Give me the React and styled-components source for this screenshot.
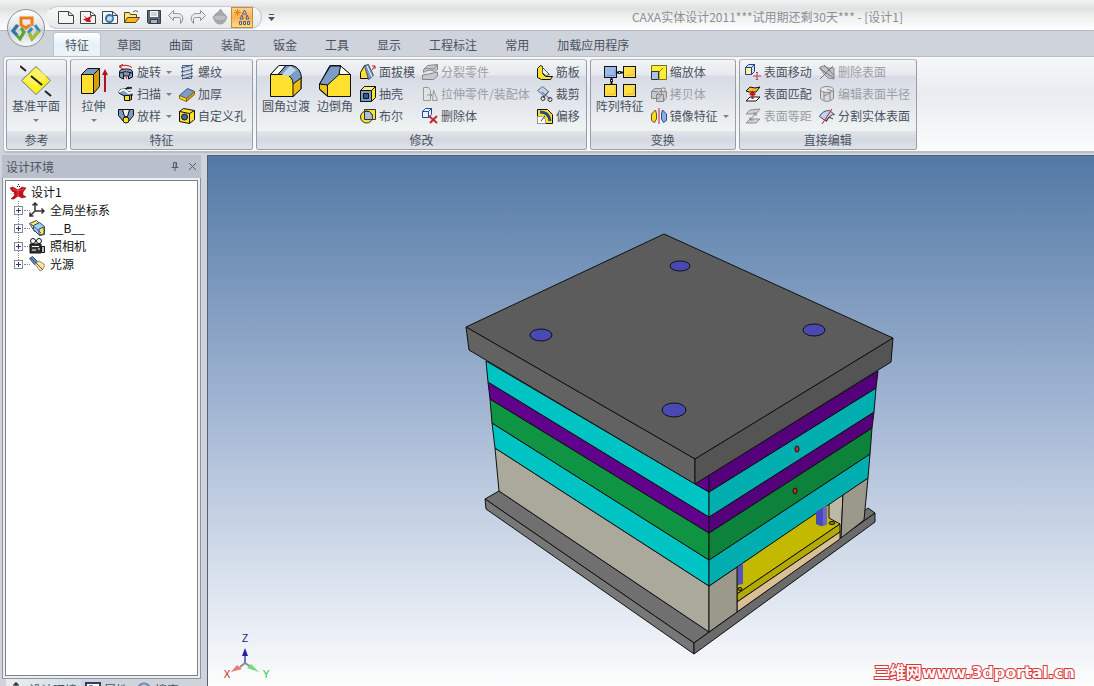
import { useState } from 'react';
import styled, { createGlobalStyle, css } from 'styled-components';

const GlobalStyle = createGlobalStyle`
  * {
    box-sizing: border-box;
  }

  body {
    margin: 0;
    overflow: hidden;
    font-family: "Noto Sans CJK SC", "Noto Sans", sans-serif;
    font-size: 12px;
    line-height: 18px;
    color: #4a525f;
  }

  button {
    font: inherit;
    color: inherit;
    padding: 0;
    border: 0;
    background: none;
    white-space: nowrap;
  }
`;

const Y = '#ffe02e';
const B = '#7b9cc6';
const K = '#111';

// ---------- icons ----------

const Svg = ({ size = 16, children }) => (
  <svg width={size} height={size} viewBox={`0 0 ${size} ${size}`} fill="none" stroke={K} aria-hidden="true">
    {children}
  </svg>
);

const page = <path d="M.5 2.500h10l5 4v8H.5z M10.500 2.500v4h5" fill="#f4f4f4" stroke="#444" />;

const icons = {
  newDoc: <Svg>{page}</Svg>,
  newPart: (
    <Svg>
      {page}
      <path d="M3 6l4 3 6-3-3 4 1 3H7L3 10l3-.5z" fill="#c3161c" stroke="none" />
    </Svg>
  ),
  newSheet: (
    <Svg>
      {page}
      <circle cx="7.500" cy="9.500" r="3.500" stroke="#2c6fb2" strokeWidth="2" />
      <path d="M5 9l5-2M5 12l6-3" stroke="#79b4e2" />
    </Svg>
  ),
  open: (
    <Svg>
      <path d="M.5 13.500v-10h5l1 2h6v3" fill="#ffe680" stroke="#5a4310" />
      <path d="M.5 13.500l3-5h12l-4 5z" fill="#f3b81f" stroke="#5a4310" />
      <path d="M9 3q3-3 5 0" stroke="#555" />
    </Svg>
  ),
  save: (
    <Svg>
      <path d="M1.500 1.500h13v13h-12l-1-1z" fill="#5d6778" stroke="#333b48" />
      <path d="M4 2h8v6H4z" fill="#f7f7f7" stroke="none" />
      <path d="M4.500 10.500h7v4h-7z" fill="#aeb5c0" stroke="#333b48" />
      <path d="M5 4h6M5 6h6" stroke="#a9b0ba" />
    </Svg>
  ),
  undo: (
    <Svg>
      <path d="M.5 6.500l5-5v3h4c4 0 6 3 5 7l-2 3v-4c0-2-1-2-3-2h-4v3z" fill="#e9ebee" stroke="#8d9199" />
    </Svg>
  ),
  redo: (
    <Svg>
      <path d="M15.500 6.500l-5-5v3h-4c-4 0-6 3-5 7l2 3v-4c0-2 1-2 3-2h4v3z" fill="#e9ebee" stroke="#8d9199" />
    </Svg>
  ),
  sphere: (
    <Svg>
      <path d="M6.500 3l2-3 2 3" fill="#bbb" stroke="#999" />
      <circle cx="8" cy="9" r="6" fill="#a8aaad" stroke="#9a9c9f" />
      <path d="M1 9q0-2 3-3h8q3 1 3 3-3 3-7 3T1 9" fill="#bcbec1" stroke="#9a9c9f" />
    </Svg>
  ),
  treeStar: (
    <Svg>
      <path d="M3.500 0v7M0 3.500h7M1 1l5 5M6 1L1 6" stroke="#e08a14" />
      <path d="M10.500 1l-2 4h4zM8 6l-2 4h3zM13 6l-1 4h3z" fill="#cfd5df" stroke="#555e6e" />
      <path d="M5.500 12.500h2v3h-2zM9.500 12.500h2v3h-2zM13.500 12.500h2v3h-2z" fill="#cfd5df" stroke="#555e6e" />
    </Svg>
  ),
  plane: (
    <Svg size={32}>
      <path d="M16 1.500L30.500 15.500 16 29.500 1.500 15.500z" fill="#ffee22" stroke="#5f7d9a" />
      <path d="M16 3L3 15.500 16 21 28 10z" fill="#fff799" stroke="none" opacity=".5" />
      <path d="M11 11l11 9M0 1l6 5M25 26l6 5" stroke="#222" strokeWidth="2" />
    </Svg>
  ),
  extrude: (
    <Svg size={32}>
      <path d="M3.500 9.500h12v19h-12z" fill={Y} />
      <path d="M3.500 9.500l6-6h12l-6 6z" fill={B} />
      <path d="M15.500 9.500l6-6v18l-6 7z" fill="#d99c0e" />
      <path d="M27 27V7" stroke="#b3131b" strokeWidth="2" />
      <path d="M24 10l3-6 3 6z" fill="#b3131b" stroke="none" />
    </Svg>
  ),
  fillet: (
    <Svg size={32}>
      <path d="M.5 9.500L9 .5h13q9 2 9 14L31 24l-8 7.500H.5z" fill={Y} />
      <path d="M.5 9.500L9 .5h7L8 9.500z" fill="#fff" />
      <path d="M8 9.500l8-9h6q9 2 9.500 13L23 19q0-8-8-9.500z" fill={B} />
      <path d="M12 9.500L20 1l6 4-8 7z" fill="#c4d5ea" stroke="none" />
      <path d="M23 19l8-6v11l-8 7.500z" fill="#f0b916" />
    </Svg>
  ),
  chamfer: (
    <Svg size={32}>
      <path d="M.5 19.500L11 .5h10l10.500 9v22H8.500l-8-7z" fill={Y} />
      <path d="M.5 19.500L11 .5h10L9 19.500z" fill={B} />
      <path d="M21 .5l10.500 9H20z" fill="#fff" />
      <path d="M.5 19l11-18h10L20 9.500 8.500 20z" fill={B} />
      <path d="M.5 19l8 1v11l-8-7z" fill="#e9c414" />
    </Svg>
  ),
  pattern: (
    <Svg size={32}>
      <path d="M13 7.500h7M7.500 13v7" strokeWidth="2" />
      <rect x=".5" y="1.500" width="12" height="11" fill="#9bb9eb" />
      <rect x="19.500" y="1.500" width="12" height="11" fill="#ffdf45" />
      <rect x=".5" y="19.500" width="12" height="12" fill="#ffdf45" />
      <rect x="19.500" y="19.500" width="12" height="12" fill="#ffdf45" />
      <path d="M14.500 6.500h2v2h-2zM6.500 14.500h2v2h-2z" fill="#fff" />
      <path d="M22 10h8V4M3 29h8v-7M22 29h8v-7" stroke="#f0b435" />
      <path d="M3 10.500h8V4" stroke="#6e93d2" />
    </Svg>
  ),
  revolve: (
    <Svg>
      <path d="M1.500 8q0-3 6.500-3t6.500 3v5l-4 2v-3h-5v3l-4-2z" fill={B} />
      <path d="M2 9q6-3 12 0M6 12l-1-3M11 12l1-3" />
      <path d="M2 2.500q6-3 12 1M5 0L1 2.500 5 5" stroke="#c3161c" />
      <path d="M8.500 4v11" stroke="#d44" strokeDasharray="2 1" />
    </Svg>
  ),
  sweep: (
    <Svg>
      <path d="M14 2Q9 0 8 3t6 3v4q-4 2-8 0L1 7q-1-4 5-4l8-1" fill={B} />
      <path d="M1 6q5-4 7-1t7 1" stroke="#fff" strokeWidth="2" />
      <path d="M6.500 9.500h5v5h-5z" fill={Y} />
      <path d="M11.500 9.500l2-1v5l-2 1z" fill="#d99c0e" />
    </Svg>
  ),
  loft: (
    <Svg>
      <path d="M.5 1.500h4l3 8-2 4-5-6zM15.500 1.500h-4l-3 8 2 4 5-6z" fill={B} />
      <path d="M4.500 1.500h7l-2 7h-3z" fill="#eef3f8" />
      <circle cx="8" cy="12" r="3" fill={Y} />
    </Svg>
  ),
  thread: (
    <Svg>
      <path d="M3.500 1.500h9v13h-9z" fill="#e6ecf4" stroke="#52627c" />
      <path d="M2 4l12-3M2 8l12-3M2 12l12-3M3 15l11-3" stroke="#40526e" />
      <path d="M3 5l10-2M3 9l10-2M3 13l10-2" stroke="#aebfd8" />
    </Svg>
  ),
  thicken: (
    <Svg>
      <path d="M.5 9.500l8-7 7 3-7 8z" fill={B} stroke="#3f506c" />
      <path d="M.5 9.500l7 3v3l-7-3z" fill={Y} stroke="#7b6413" />
      <path d="M7.500 12.500l8-7v3l-8 7z" fill="#d6a316" stroke="#7b6413" />
    </Svg>
  ),
  hole: (
    <Svg>
      <path d="M.5 3.500l4-3 11 2v9l-5 4-10-2z" fill={Y} />
      <path d="M10.500 5.500v10M.5 3.500l10 2 5-3" />
      <circle cx="5.500" cy="9" r="3" fill="#376bad" />
    </Svg>
  ),
  draft: (
    <Svg>
      <path d="M.5 14.500v-6l4-7h3l1 13z" fill={Y} />
      <path d="M4.500 1.500l4-1 5 11-5 4z" fill={B} stroke="#40526e" />
      <path d="M7 2l5 11" stroke="#fff" />
      <path d="M12 6l3-4M12 2h3v3" stroke="#c3161c" />
    </Svg>
  ),
  shell: (
    <Svg>
      <path d="M.5 4.500l4-4h11v11l-4 4H.5z" fill={Y} />
      <path d="M.5 4.500l4-4h11l-4 4z" fill="#fff07b" />
      <path d="M.5 4.500h11v11H.5z" fill={B} />
      <path d="M3.500 7.500h5v5h-5z" fill="#2d5b92" />
    </Svg>
  ),
  boolean: (
    <Svg>
      <path d="M4.500 1.500h11v10h-11z" fill={Y} stroke="#333" />
      <circle cx="6.500" cy="9" r="6" fill={Y} stroke="#333" />
      <path d="M4.500 3.500h5q4 3 3 8h-8z" fill="#a9bfe0" stroke="#333" />
    </Svg>
  ),
  split: (
    <Svg>
      <path d="M1.500 5.500l4-4 10-1v5l-3 2q-5-3-11 1zM.5 11l6-1 9-2v4l-4 3.500H.5z" fill="#c6c8cb" stroke="#888" />
      <path d="M2 5q5-1 10 0l3-4" stroke="#888" />
    </Svg>
  ),
  stretch: (
    <Svg>
      <path d="M1.500 1.500h5l2 3v10h-7zM11.500 4l4 10.500h-5z" fill="#e1e2e4" stroke="#999" />
      <path d="M5 9h5M8 7l2 2-2 2" stroke="#999" />
    </Svg>
  ),
  deleteBody: (
    <Svg>
      <path d="M.5 3.500l3-3h6v6l-3 3h-6z" fill="#e9f1ff" stroke="#234a9a" />
      <path d="M.5 3.500h6v6M6.500 3.500l3-3" stroke="#234a9a" />
      <path d="M7 8l8 7M15 8l-7 7" stroke="#c12a32" strokeWidth="2" />
    </Svg>
  ),
  rib: (
    <Svg>
      <path d="M.5 4.500l3-3 2 1v7l3 3h7l-2 3h-9l-4-2z" fill={Y} />
      <path d="M5.500 3.500l7 7-4 1-3-3z" fill="#e8eef5" stroke="#555" />
    </Svg>
  ),
  trim: (
    <Svg>
      <path d="M.5 4.500l5-4 6 5-4 5z" fill="#c0d2ee" stroke="#5c6d8b" />
      <path d="M5 6l8 7M12 5l-6 7" stroke="#555" />
      <circle cx="13" cy="13.500" r="2" stroke="#333" />
      <circle cx="6" cy="12.500" r="2" stroke="#333" />
    </Svg>
  ),
  offset: (
    <Svg>
      <path d="M.5 1.500h10l5 5v9h-15z" fill={Y} />
      <path d="M3 4q9 0 10 9" stroke="#244d82" strokeWidth="3" />
      <path d="M.5 8.500h5l3 3v4h-8z" fill="#fff" stroke="#999" />
      <path d="M8 8l-4 5" stroke="#333" />
    </Svg>
  ),
  scale: (
    <Svg>
      <path d="M.5 1.500h15v14H8v-8H.5z" fill="#ffee35" stroke="#7c7116" />
      <path d="M.5 7.500h7v8h-7z" fill="#a9c2e8" stroke="#333" />
      <path d="M8 8l4-4" stroke="#7c7116" />
    </Svg>
  ),
  copyBody: (
    <Svg>
      <path d="M.5 5.500l3-3h7v6l-3 4h-7zM5.500 8.500l3-3h7v6l-3 4h-7zM5.500 8.500h7v7M.5 5.500h6" fill="#c7c9cc" stroke="#888" />
      <path d="M11 2h3v3" stroke="#888" />
    </Svg>
  ),
  mirror: (
    <Svg>
      <path d="M.5 6l4-4 1 4v5l-2 3.500-3-2z" fill="#ffd92a" stroke="#665515" />
      <path d="M15.500 6l-4-4-1 4v5l2 3.500 3-2z" fill="#84aef0" stroke="#2c4d88" />
      <path d="M8 0v16" stroke="#d31c25" />
    </Svg>
  ),
  moveFace: (
    <Svg>
      <path d="M.5 3.500l3-3h6v7l-3 3h-6z" fill="#cfe1ff" stroke="#223f85" />
      <path d="M6.500 3.500v7M6.500 3.500l3-3M.5 3.500h6" stroke="#223f85" />
      <path d="M1 4h5v6H1z" fill="#fff2a0" stroke="none" />
      <path d="M12 8v8M8 12h8M11 9l1-1 1 1M11 15l1 1 1-1" stroke="#b54045" />
    </Svg>
  ),
  matchFace: (
    <Svg>
      <path d="M1 5l4-4q5 2 10 0l-4 5H4z" fill="#f5bf28" />
      <path d="M1 15l4-4h10l-4 4z" fill="#fff" />
      <path d="M7.500 13V6M5 9l2.500-3L10 9" stroke="#c3161c" strokeWidth="2" />
    </Svg>
  ),
  offsetFace: (
    <Svg>
      <path d="M1 6l4-4 10-1-4 5zM1 15l4-4h10l-4 4z" fill="#d0d2d5" stroke="#8d8f92" />
      <path d="M5 12l6-7M8 5h3v3M5 9v3h3" stroke="#888" />
    </Svg>
  ),
  deleteFace: (
    <Svg>
      <path d="M1 3l4-1q3 3 10 2v11l-6-1Q3 9 1 3z" fill="#bfc1c4" stroke="#888" />
      <path d="M0 4l15 10M1 15L14 2M5 1l10 10" stroke="#777" />
    </Svg>
  ),
  editRadius: (
    <Svg>
      <path d="M1.500 3.500v9q6 6 13 0v-9" fill="#d8d9dc" stroke="#888" />
      <ellipse cx="8" cy="3.500" rx="6.500" ry="3" fill="#e4e5e7" stroke="#888" />
      <path d="M5 6v8M11 6v8M5 10l6-3M8 3l5 2" stroke="#888" />
    </Svg>
  ),
  splitFace: (
    <Svg>
      <path d="M.5 8.500q3-6 10-6l5 4q-5 0-8 7z" fill="#c3d1f0" stroke="#444b66" />
      <path d="M13 1L3 16" stroke="#c3161c" />
      <path d="M7 13l3-4 4 2" stroke="#333" />
    </Svg>
  ),
  design: (
    <Svg>
      <path d="M0 4l3-1 5 3 4-3 4 1-3 4v3l3 2-4 1-4-2-4 3H1l4-4z" fill="#c90f17" stroke="#7c0509" strokeWidth=".5" />
      <path d="M3 5l5 2v5M8 7l6-2" stroke="#ff8a8a" strokeWidth=".5" />
      <path d="M7 2.500h3M8.500 0v2" stroke="#222" strokeDasharray="1 1" />
      <path d="M0 8.500h4" stroke="#fff" />
    </Svg>
  ),
  axes: (
    <Svg>
      <path d="M6 1v8l-5 5M6 9h9M3.500 3.500L6 1l2.500 2.500M12.500 6.500L15 9l-2.500 2.500M1 10.500V14h3.500" stroke="#333" strokeWidth="1.500" />
    </Svg>
  ),
  part: (
    <Svg>
      <path d="M.5 3.500l7-3 3 3-1 7-4 1z" fill="#ffe96a" stroke="#444" />
      <path d="M4.500 5.500l6-3 5 4v8l-5 1-6-6z" fill="#9fd0f5" stroke="#2d4a6e" />
      <path d="M10 9l5-2v7l-5 1z" fill="#f4e268" stroke="#444" />
      <path d="M2 4l10 9" stroke="#2d5b92" />
    </Svg>
  ),
  camera: (
    <Svg>
      <circle cx="4" cy="3" r="2.500" fill="#fff" />
      <circle cx="10" cy="3" r="2.500" fill="#fff" />
      <path d="M1 6h11v9H1z" fill="#333" />
      <path d="M3 8.500h7M3 12h4M9 11h2" stroke="#fff" />
      <path d="M12.500 8.500h3v6h-3z" fill="#bbb" />
    </Svg>
  ),
  light: (
    <Svg>
      <path d="M.5 2.500l3-2 5 5-3 3z" fill="#5d8fc7" stroke="#284c7e" />
      <path d="M6 8l4-3 5 3q1 5-4 7z" fill="#fbe3a6" stroke="#a58c5d" />
      <path d="M2 2l12 12" stroke="#4e5b70" />
    </Svg>
  ),
  searchTab: (
    <Svg>
      <circle cx="8" cy="8" r="6.500" stroke="#7589aa" strokeWidth="2" />
      <circle cx="8" cy="8" r="3" stroke="#7589aa" />
    </Svg>
  ),
  propsTab: (
    <Svg>
      <path d="M1 1h14v14H1z" fill="#fff" stroke="#2c3e66" strokeWidth="2" />
      <path d="M4 4h4v6H4z" fill="#37609c" />
      <path d="M10 5h4M10 8h4" stroke="#2c3e66" />
    </Svg>
  ),
};

const AppMark = () => (
  <svg width="40" height="40" viewBox="0 0 40 40" fill="none" strokeWidth="3" aria-hidden="true">
    <defs>
      <linearGradient id="orb" x1="0" y1="0" x2="0" y2="1">
        <stop offset="0" stopColor="#fff" />
        <stop offset=".5" stopColor="#e1e3e6" />
        <stop offset=".55" stopColor="#cdd0d5" />
        <stop offset="1" stopColor="#fafafa" />
      </linearGradient>
    </defs>
    <circle cx="20" cy="20" r="18.500" fill="url(#orb)" stroke="#8e9299" strokeWidth="1" />
    <path d="M15 18v-8h11v8M15 17l5 3 4-3" stroke="#ef7d1a" />
    <path d="M11 17l-4 6 7 8 4-7-3-4" stroke="#54a72f" />
    <path d="M12 17l-5 6 4 4" stroke="#2c73b8" />
    <path d="M29 17l4 6-7 8-3-7 3-4" stroke="#2b8fc2" />
    <path d="M33 23l-7 8-3-6" stroke="#a5bf2e" />
  </svg>
);

// ---------- title bar ----------

const Shell = styled.div`
  display: flex;
  flex-direction: column;
  height: 100vh;
  overflow: hidden;
  background: #cfd3dc;
`;

const TitleBar = styled.header`
  position: relative;
  display: flex;
  align-items: center;
  flex: none;
  height: 31px;
  padding: 4px 0 0 46px;
  border-bottom: 1px solid #b4b8c0;
  background: linear-gradient(#f1f3f2, #dfe2e2 30%, #eef0f0 55%, #fdfdfd);
`;

const Orb = styled.button`
  position: absolute;
  left: 6px;
  top: 8px;
  height: 40px;
  z-index: 1;
`;

const QuickBar = styled.div`
  display: flex;
  align-items: center;
  height: 23px;
  padding: 0 8px;
  border: 1px solid #c6cad0;
  border-left-color: transparent;
  border-radius: 12px;
  background: linear-gradient(#f7f8f9, #e6e9eb);
`;

const QuickButton = styled.button`
  display: grid;
  place-items: center;
  width: 22px;
  height: 21px;
  ${({ $active }) =>
    $active &&
    css`
      border: 1px solid #c48b3c;
      background: linear-gradient(#f9cf93, #fdb052 50%, #ffdc85);
    `}
`;

const MoreButton = styled.button`
  display: grid;
  place-items: center;
  width: 19px;
  height: 20px;
`;

const Title = styled.h1`
  flex: 1;
  margin: 0;
  padding-left: 160px;
  font-size: 12px;
  font-weight: 400;
  color: #8b8e92;
  text-align: center;
  white-space: nowrap;
`;

// ---------- ribbon ----------

const TabRow = styled.nav`
  display: flex;
  align-items: flex-end;
  flex: none;
  height: 25px;
  padding-left: 51px;
`;

const Tab = styled.button`
  height: 23px;
  margin: 0 3px;
  padding: 0 11px;
  ${({ $active }) =>
    $active &&
    css`
      border-radius: 3px 3px 0 0;
      background: linear-gradient(#fff, #e4f2f7 50%, #eef2f6);
      box-shadow: 0 0 2px #8fa4ad;
    `}
`;

const Ribbon = styled.section`
  display: flex;
  gap: 3px;
  flex: none;
  height: 97px;
  margin-left: 3px;
  padding: 2px;
  border: 1px solid #b9bdc6;
  border-width: 1px 0 2px 1px;
  border-radius: 4px 0 0 4px;
  background: linear-gradient(#f6f7f9, #e9ecf0 40%, #fbfcfc);
`;

const Group = styled.div`
  display: flex;
  flex-direction: column;
  height: 91px;
  border: 1px solid #989da7;
  border-top-color: #b8bcc4;
  border-radius: 3px;
  background: linear-gradient(#f1f3f5, #e6e9ee 17%, #d7dbe5 18%, #e3e7ec 50%, #f0f5f3 82%, #eef1f3);
`;

const GroupBody = styled.div`
  display: flex;
  gap: 7px;
  padding: 1px 6px 0 5px;
`;

const GroupName = styled.div`
  margin-top: auto;
  height: 18px;
  line-height: 18px;
  text-align: center;
  border-radius: 0 0 3px 3px;
  background: linear-gradient(#e2e5ea, #d3d7e0 50%, #dfe4e7);
`;

const BigButton = styled.button`
  display: flex;
  flex-direction: column;
  align-items: center;
  height: 68px;
  min-width: 35px;
  padding-top: 4px;
`;

const Column = styled.div`
  display: grid;
  grid-auto-rows: 22px;
  justify-items: start;
`;

const SmallButton = styled.button`
  display: flex;
  align-items: center;
  gap: 3px;

  &:disabled {
    color: #9b9ea3;
  }
`;

const Caret = styled.i`
  margin: 4px 0 0 2px;
  border: 3px solid transparent;
  border-top-color: #7b808a;

  ${BigButton} & {
    margin: 4px 0 0;
  }
`;

// ---------- work area ----------

const Work = styled.main`
  display: flex;
  flex: 1;
  min-height: 0;
  padding-top: 2px;
`;

const Dock = styled.aside`
  display: flex;
  flex-direction: column;
  flex: none;
  width: 208px;
  padding: 0 6px 0 2px;
  border-right: 1px solid #53606f;
`;

const DockHeader = styled.div`
  display: flex;
  align-items: center;
  gap: 7px;
  flex: none;
  height: 23px;
  padding: 0 4px;
  background: #b9c0cb;

  h2 {
    flex: 1;
    margin: 0;
    font-size: 12px;
    font-weight: 400;
  }
`;

const HeaderButton = styled.button`
  display: grid;
  place-items: center;
  width: 10px;
  height: 16px;
`;

const TreeFrame = styled.div`
  flex: 1;
  min-height: 0;
  padding: 2px;
  border: 1px solid #91949c;
  border-top: 0;
  background: #eceef3;
`;

const Tree = styled.ul`
  height: 100%;
  margin: 0;
  padding: 2px 4px;
  border: 1px solid #7e828b;
  background: #fff;
  color: #111;
  list-style: none;
`;

const Branch = styled.ul`
  margin: 0 0 0 8px;
  padding: 0;
  list-style: none;
  border-left: 1px dotted #888;
  height: 65px;
`;

const Node = styled.li`
  display: flex;
  align-items: center;
  gap: 5px;
  height: 18px;
`;

const Expander = styled.button`
  display: grid;
  place-items: center;
  width: 9px;
  height: 9px;
  margin-left: -5px;
  border: 1px solid #848a98;
  background: #fff;
`;

const Dots = styled.i`
  width: 6px;
  margin: 0 -6px 0 -4px;
  border-top: 1px dotted #888;
`;

const DockTabs = styled.div`
  display: flex;
  align-items: flex-start;
  flex: none;
  height: 7px;
  padding-left: 4px;
  overflow: hidden;
`;

const DockTab = styled.button`
  display: flex;
  align-items: center;
  gap: 3px;
  height: 22px;
  padding: 0 4px;
  ${({ $active }) => $active && 'background: linear-gradient(90deg, #e9edf0, #cfe0e6);'}
`;

const Viewport = styled.section`
  position: relative;
  flex: 1;
  min-width: 0;
  border-top: 1px solid #53606f;
  background: linear-gradient(#5279a5, #a6b9d5 50%, #fcfdfd);
`;

const Scene = styled.svg`
  display: block;
  width: 100%;
  height: 100%;
`;

const Watermark = styled.a`
  position: absolute;
  right: 19px;
  bottom: 3px;
  font-family: "DejaVu Sans", "Noto Sans CJK SC", sans-serif;
  font-size: 16px;
  font-weight: 700;
  line-height: 20px;
  color: #fff;
  text-decoration: none;
  white-space: nowrap;
  -webkit-text-stroke: 2px #dc3538;
  paint-order: stroke fill;
`;

const quick = [
  ['newDoc', '新建'],
  ['newPart', '新建设计'],
  ['newSheet', '新建图纸'],
  ['open', '打开'],
  ['save', '保存'],
  ['undo', '撤销'],
  ['redo', '重做'],
  ['sphere', '渲染'],
  ['treeStar', '设计树'],
];

const tabs = ['特征', '草图', '曲面', '装配', '钣金', '工具', '显示', '工程标注', '常用', '加载应用程序'];

const groups = [
  { name: '参考', big: [{ icon: 'plane', text: '基准平面', menu: true }], columns: [] },
  {
    name: '特征',
    big: [{ icon: 'extrude', text: '拉伸', menu: true }],
    columns: [
      [
        { icon: 'revolve', text: '旋转', menu: true },
        { icon: 'sweep', text: '扫描', menu: true },
        { icon: 'loft', text: '放样', menu: true },
      ],
      [
        { icon: 'thread', text: '螺纹' },
        { icon: 'thicken', text: '加厚' },
        { icon: 'hole', text: '自定义孔' },
      ],
    ],
  },
  {
    name: '修改',
    big: [
      { icon: 'fillet', text: '圆角过渡' },
      { icon: 'chamfer', text: '边倒角' },
    ],
    columns: [
      [
        { icon: 'draft', text: '面拔模' },
        { icon: 'shell', text: '抽壳' },
        { icon: 'boolean', text: '布尔' },
      ],
      [
        { icon: 'split', text: '分裂零件', off: true },
        { icon: 'stretch', text: '拉伸零件/装配体', off: true },
        { icon: 'deleteBody', text: '删除体' },
      ],
      [
        { icon: 'rib', text: '筋板' },
        { icon: 'trim', text: '裁剪' },
        { icon: 'offset', text: '偏移' },
      ],
    ],
  },
  {
    name: '变换',
    big: [{ icon: 'pattern', text: '阵列特征' }],
    columns: [
      [
        { icon: 'scale', text: '缩放体' },
        { icon: 'copyBody', text: '拷贝体', off: true },
        { icon: 'mirror', text: '镜像特征', menu: true },
      ],
    ],
  },
  {
    name: '直接编辑',
    big: [],
    columns: [
      [
        { icon: 'moveFace', text: '表面移动' },
        { icon: 'matchFace', text: '表面匹配' },
        { icon: 'offsetFace', text: '表面等距', off: true },
      ],
      [
        { icon: 'deleteFace', text: '删除表面', off: true },
        { icon: 'editRadius', text: '编辑表面半径', off: true },
        { icon: 'splitFace', text: '分割实体表面' },
      ],
    ],
  },
];

const nodes = [
  ['axes', '全局坐标系'],
  ['part', '__B__'],
  ['camera', '照相机'],
  ['light', '光源'],
];

// 模架: [颜色, 轮廓点]
const faces = [
  // 底板
  ['#707070', '485,499 499,491 709,632 694,643'],
  ['#777', '485,499 694,643 694,654 486,509'],
  ['#707070', '864,511 868,508 875,513 840,538'],
  ['#6b6b6b', '694,643 875,513 875,522 694,654'],
  // 左侧面
  ['#aaa99b', '495,448 709,586 709,632 499,491'],
  ['#00c4c3', '492,423 709,560 709,586 495,448'],
  ['#0f9444', '490,399 709,533 709,560 492,423'],
  ['#62008e', '488,382 709,517 709,533 490,399'],
  ['#00c4c3', '486,361 709,492 709,517 488,382'],
  ['#62008e', '695,484 709,475 709,492'],
  // 顶出板
  ['#bdb9a8', '828,504 843,494 841,538 828,528'],
  ['#c3ba00', '737,567 829,503 829,518 840,524 737,594'],
  ['#b3aa00', '737,594 840,524 840,532 737,602'],
  ['#d9bf91', '737,602 840,532 840,539 737,612'],
  // 右侧面
  ['#9a998a', '709,586 737,567 737,612 709,632'],
  ['#9a998a', '843,494 868,478 864,520 841,538'],
  ['#00aeb0', '709,560 870,454 868,478 709,586'],
  ['#0c823b', '709,533 872,428 870,454 709,560'],
  ['#54007b', '709,517 874,412 872,428 709,533'],
  ['#00aeb0', '709,492 876,388 874,412 709,517'],
  ['#54007b', '709,475 878,371 876,388 709,492'],
  // 顶板
  ['#5c5c5c', '466,327 664,234 893,338 695,459'],
  ['#626262', '466,327 695,459 695,484 469,350'],
  ['#545454', '695,459 893,338 891,362 695,484'],
];

const holes = [
  [680, 266, 10, 5],
  [541, 335, 11, 6],
  [814, 330, 11, 6],
  [674, 410, 12, 7],
];

const Mold = () => (
  <Scene viewBox="208 156 886 530" preserveAspectRatio="xMidYMid meet" role="img" aria-label="B">
    <g stroke="#101010" strokeWidth="1" strokeLinejoin="round">
      {faces.map(([fill, points]) => (
        <polygon key={points} fill={fill} points={points} />
      ))}
      {holes.map(([cx, cy, rx, ry]) => (
        <ellipse key={cx} cx={cx} cy={cy} rx={rx} ry={ry} fill="#4a49b4" />
      ))}
      <ellipse cx="797" cy="449" rx="2" ry="3" fill="#d32a22" />
      <ellipse cx="795" cy="491" rx="2" ry="3" fill="#d32a22" />
      <ellipse cx="832" cy="523" rx="3" ry="1.500" fill="#8f8800" />
      <ellipse cx="740" cy="589" rx="2" ry="1.500" fill="#8f8800" />
    </g>
    <path d="M816 512l11-7v19q-5 4-11 0z" fill="#4a49b8" />
    <path d="M823 508l4-3v19l-4 2z" fill="#6866cf" />
    <path d="M738 567l5-4v21l-5 1z" fill="#5553c4" />

    <g strokeWidth="2">
      <path d="M245 663v-9" stroke="#6d70dd" />
      <path d="M242 656l3-8 3 8z" fill="#2323a0" />
      <path d="M245 663l-5 4M245 663l6 4" stroke="#8a8a8a" />
      <path d="M231 672l6-7 5 4z" fill="#e47b7b" />
      <path d="M259 672l-12-4 4-4z" fill="#72dc85" />
    </g>
    <g fontFamily="Liberation Sans, sans-serif" fontSize="10" textAnchor="middle">
      <text x="245" y="642" fill="#1a1a8c">Z</text>
      <text x="227" y="678" fill="#c22424">X</text>
      <text x="266" y="678" fill="#27c227">Y</text>
    </g>
  </Scene>
);

const App = () => {
  const [tab, setTab] = useState('特征');

  return (
    <Shell>
      <GlobalStyle />
      <TitleBar>
        <Orb aria-label="菜单">
          <AppMark />
        </Orb>
        <QuickBar>
          {quick.map(([icon, label]) => (
            <QuickButton key={icon} aria-label={label} $active={icon === 'treeStar'}>
              {icons[icon]}
            </QuickButton>
          ))}
        </QuickBar>
        <MoreButton aria-label="自定义">
          <svg width="7" height="7" viewBox="0 0 7 7">
            <path d="M1 0h5v1H1zM0 3h7L3.500 7z" fill="#4c515a" />
          </svg>
        </MoreButton>
        <Title>CAXA实体设计2011***试用期还剩30天*** - [设计1]</Title>
      </TitleBar>

      <TabRow>
        {tabs.map((name) => (
          <Tab key={name} $active={name === tab} onClick={() => setTab(name)}>
            {name}
          </Tab>
        ))}
      </TabRow>

      <Ribbon>
        {groups.map((group) => (
          <Group key={group.name}>
            <GroupBody>
              {group.big.map(({ icon, text, menu }) => (
                <BigButton key={icon}>
                  {icons[icon]}
                  {text}
                  {menu && <Caret />}
                </BigButton>
              ))}
              {group.columns.map((items) => (
                <Column key={items[0].icon}>
                  {items.map(({ icon, text, menu, off }) => (
                    <SmallButton key={icon} disabled={off}>
                      {icons[icon]}
                      {text}
                      {menu && <Caret />}
                    </SmallButton>
                  ))}
                </Column>
              ))}
            </GroupBody>
            <GroupName>{group.name}</GroupName>
          </Group>
        ))}
      </Ribbon>

      <Work>
        <Dock>
          <DockHeader>
            <h2>设计环境</h2>
            <HeaderButton aria-label="固定">
              <svg width="8" height="9" viewBox="0 0 8 9" fill="none" stroke="#555c68">
                <path d="M2.500 5V.5h3V5M5 .5V5M.5 5.500h7M4 6v3" />
              </svg>
            </HeaderButton>
            <HeaderButton aria-label="关闭">
              <svg width="9" height="9" viewBox="0 0 9 9" stroke="#555c68">
                <path d="M1 1l7 7M8 1L1 8" />
              </svg>
            </HeaderButton>
          </DockHeader>
          <TreeFrame>
            <Tree>
              <Node>{icons.design}设计1</Node>
              <li>
                <Branch>
                  {nodes.map(([icon, text]) => (
                    <Node key={icon}>
                      <Expander aria-label="展开">
                        <svg width="5" height="5" viewBox="0 0 5 5" stroke="#2c3e7a">
                          <path d="M0 2.500h5M2.500 0v5" />
                        </svg>
                      </Expander>
                      <Dots />
                      {icons[icon]}
                      {text}
                    </Node>
                  ))}
                </Branch>
              </li>
            </Tree>
          </TreeFrame>
          <DockTabs>
            <DockTab $active>{icons.axes}设计环境</DockTab>
            <DockTab>{icons.propsTab}属性</DockTab>
            <DockTab>{icons.searchTab}搜索</DockTab>
          </DockTabs>
        </Dock>
        <Viewport>
          <Mold />
          <Watermark href="#">三维网www.3dportal.cn</Watermark>
        </Viewport>
      </Work>
    </Shell>
  );
};

export default App;
